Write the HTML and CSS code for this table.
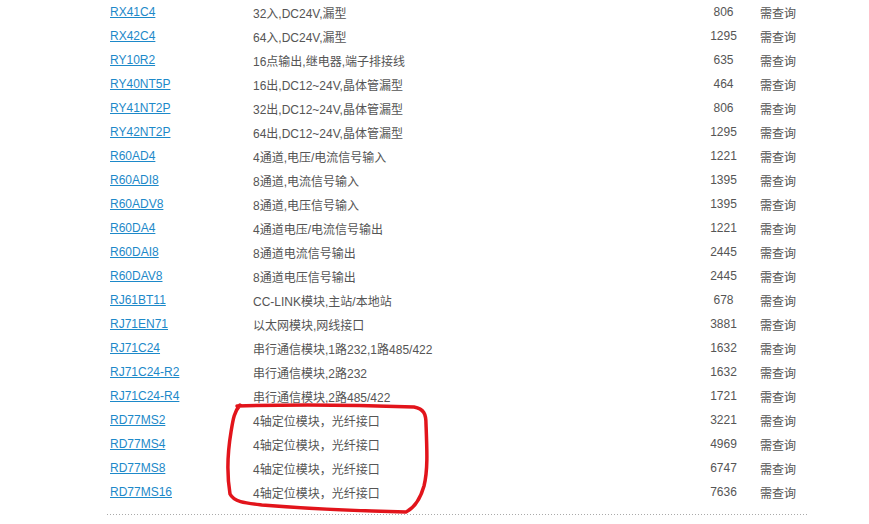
FILE: index.html
```html
<!DOCTYPE html>
<html lang="zh-CN">
<head>
    <meta charset="UTF-8">
    <title>产品价格表</title>
    <link rel="stylesheet" href="styles.css">
</head>
<body>
    <div class="wrap">
        <table class="price-table">
            <colgroup>
                <col class="c-model">
                <col class="c-desc">
                <col class="c-price">
                <col class="c-stock">
            </colgroup>
            <tbody>
                <tr><td><a href="#">RX41C4</a></td><td>32入,DC24V,漏型</td><td class="num">806</td><td>需查询</td></tr>
                <tr><td><a href="#">RX42C4</a></td><td>64入,DC24V,漏型</td><td class="num">1295</td><td>需查询</td></tr>
                <tr><td><a href="#">RY10R2</a></td><td>16点输出,继电器,端子排接线</td><td class="num">635</td><td>需查询</td></tr>
                <tr><td><a href="#">RY40NT5P</a></td><td>16出,DC12~24V,晶体管漏型</td><td class="num">464</td><td>需查询</td></tr>
                <tr><td><a href="#">RY41NT2P</a></td><td>32出,DC12~24V,晶体管漏型</td><td class="num">806</td><td>需查询</td></tr>
                <tr><td><a href="#">RY42NT2P</a></td><td>64出,DC12~24V,晶体管漏型</td><td class="num">1295</td><td>需查询</td></tr>
                <tr><td><a href="#">R60AD4</a></td><td>4通道,电压/电流信号输入</td><td class="num">1221</td><td>需查询</td></tr>
                <tr><td><a href="#">R60ADI8</a></td><td>8通道,电流信号输入</td><td class="num">1395</td><td>需查询</td></tr>
                <tr><td><a href="#">R60ADV8</a></td><td>8通道,电压信号输入</td><td class="num">1395</td><td>需查询</td></tr>
                <tr><td><a href="#">R60DA4</a></td><td>4通道电压/电流信号输出</td><td class="num">1221</td><td>需查询</td></tr>
                <tr><td><a href="#">R60DAI8</a></td><td>8通道电流信号输出</td><td class="num">2445</td><td>需查询</td></tr>
                <tr><td><a href="#">R60DAV8</a></td><td>8通道电压信号输出</td><td class="num">2445</td><td>需查询</td></tr>
                <tr><td><a href="#">RJ61BT11</a></td><td>CC-LINK模块,主站/本地站</td><td class="num">678</td><td>需查询</td></tr>
                <tr><td><a href="#">RJ71EN71</a></td><td>以太网模块,网线接口</td><td class="num">3881</td><td>需查询</td></tr>
                <tr><td><a href="#">RJ71C24</a></td><td>串行通信模块,1路232,1路485/422</td><td class="num">1632</td><td>需查询</td></tr>
                <tr><td><a href="#">RJ71C24-R2</a></td><td>串行通信模块,2路232</td><td class="num">1632</td><td>需查询</td></tr>
                <tr><td><a href="#">RJ71C24-R4</a></td><td>串行通信模块,2路485/422</td><td class="num">1721</td><td>需查询</td></tr>
                <tr><td><a href="#">RD77MS2</a></td><td>4轴定位模块，光纤接口</td><td class="num">3221</td><td>需查询</td></tr>
                <tr><td><a href="#">RD77MS4</a></td><td>4轴定位模块，光纤接口</td><td class="num">4969</td><td>需查询</td></tr>
                <tr><td><a href="#">RD77MS8</a></td><td>4轴定位模块，光纤接口</td><td class="num">6747</td><td>需查询</td></tr>
                <tr><td><a href="#">RD77MS16</a></td><td>4轴定位模块，光纤接口</td><td class="num">7636</td><td>需查询</td></tr>
            </tbody>
        </table>
        <div class="dots"></div>
    </div>

    <!-- hand-drawn mark over the RD77MS rows -->
    <svg class="mark" width="869" height="524" viewBox="0 0 869 524">
        <path d="M237 406 C300 404 360 405 414 407 C424 409 426 414 426 424 C427 450 428 470 424 486 C420 500 414 508 406 512 C360 511 300 508 262 505 C245 503 234 502 230 494 C226 470 228 450 231 432 C233 420 234 412 240 405"
              fill="none" stroke="#e2141b" stroke-width="3.5" stroke-linecap="round" stroke-linejoin="round"/>
    </svg>
</body>
</html>
```

FILE: styles.css
```css
body {
    margin: 0;
    font-family: "Liberation Sans", Arial, "Noto Sans CJK SC", sans-serif;
    font-size: 12px;
    color: #555;
    background: #fff;
}

.wrap {
    width: 701px;
    margin-left: 107px;
}

.price-table {
    width: 701px;
    border-collapse: collapse;
    table-layout: fixed;
}

.c-model { width: 143px; }
.c-desc { width: 440px; }
.c-price { width: 67px; }
.c-stock { width: 51px; }

.price-table td {
    height: 24px;
    padding: 0 3px;
    white-space: nowrap;
    vertical-align: middle;
}

.price-table td.num {
    text-align: center;
}

.price-table a {
    color: #1d89c9;
    text-decoration: underline;
}

.dots {
    margin-top: 10px;
    height: 1px;
    background-image: linear-gradient(to right, #aaa 1px, transparent 1px);
    background-size: 3px 1px;
}

.mark {
    position: absolute;
    left: 0;
    top: 0;
    pointer-events: none;
}
```
